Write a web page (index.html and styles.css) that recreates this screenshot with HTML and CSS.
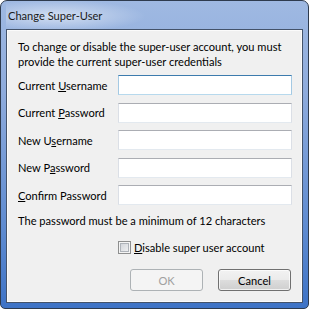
FILE: index.html
```html
<!DOCTYPE html>
<html lang="en">
  <head>
    <meta charset="UTF-8" />
    <title>Change Super-User</title>
    <link rel="stylesheet" href="styles.css">
  </head>
  <body>
    <div class="window">
      <div class="titlebar">Change Super-User</div>
      <div class="client">
        <p class="intro">To change or disable the super-user account, you must provide the current super-user credentials</p>
        <div class="fields">
          <label>Current <u>U</u>sername</label>
          <input type="text" class="focused" />
          <label>Current <u>P</u>assword</label>
          <input type="password" />
          <label>New U<u>s</u>ername</label>
          <input type="text" />
          <label>New P<u>a</u>ssword</label>
          <input type="password" />
          <label><u>C</u>onfirm Password</label>
          <input type="password" />
        </div>
        <p class="note">The password must be a minimum of 12 characters</p>
        <div class="check-row">
          <span class="checkbox"></span>
          <span><u>D</u>isable super user account</span>
        </div>
        <div class="buttons">
          <button disabled>OK</button>
          <button>Cancel</button>
        </div>
      </div>
    </div>
  </body>
</html>
```

FILE: styles.css
```css
body {
  margin: 0;
  background: #fff;
  font-family: Lato, "Liberation Sans", sans-serif;
  font-size: 11.1px;
  color: #000;
}
.window {
  width: 309px;
  height: 309px;
  box-sizing: border-box;
  border: 1px solid #2e3b4e;
  border-radius: 7px 7px 5px 5px;
  padding: 0 5px 5px;
  display: flex;
  flex-direction: column;
  background: linear-gradient(to bottom, #9fb9e2 0%, #8eabdc 30%, #5d8ad0 75%, #3e73c6 100%);
}
.titlebar {
  height: 28px;
  line-height: 29px;
  padding-left: 2px;
  color: #1a1a1a;
  background: radial-gradient(ellipse 90px 16px at 50px 15px, rgba(255,255,255,0.55), rgba(255,255,255,0));
}
.client {
  flex: 1;
  min-height: 0;
  background: #f0f0f0;
  border: 1px solid #44536a;
  box-shadow: inset 0 0 0 1px #fbfbfb;
  padding: 9px 10px 0 11px;
  display: flex;
  flex-direction: column;
}
.intro {
  margin: 0;
  line-height: 15px;
}
.fields {
  margin-top: 6px;
  display: grid;
  grid-template-columns: 100px minmax(0, 1fr);
  row-gap: 7.5px;
  align-items: center;
}
.fields label {
  white-space: nowrap;
}
.fields input {
  width: 100%;
  min-width: 0;
  height: 20px;
  box-sizing: border-box;
  margin: 0;
  background: #fff;
  border: 1px solid #dbdfe6;
  border-top-color: #abadb3;
  border-bottom-color: #e3e9ef;
  outline: none;
}
.fields input.focused {
  border-color: #a4c9e3;
  border-top-color: #3d7bad;
  border-bottom-color: #b7d9ed;
}
.note {
  margin: 8px 0 0;
  line-height: 15px;
  white-space: nowrap;
}
.check-row {
  margin-top: 12px;
  padding-left: 100px;
  display: flex;
  align-items: center;
  gap: 3px;
  height: 15px;
  white-space: nowrap;
}
.checkbox {
  width: 13px;
  height: 13px;
  box-sizing: border-box;
  border: 1px solid #8e8f8f;
  box-shadow: inset 0 0 0 1px #f4f4f4, inset 0 0 0 2px #aeb3b9;
  background: linear-gradient(135deg, #cbcfd5, #f6f6f6);
}
.buttons {
  margin-top: 14px;
  display: flex;
  justify-content: flex-end;
  gap: 15px;
  padding-right: 1px;
}
.buttons button {
  width: 73px;
  height: 22px;
  font: inherit;
  color: #000;
  border: 1px solid #707070;
  border-radius: 3px;
  background: linear-gradient(to bottom, #f2f2f2 0%, #ebebeb 50%, #dddddd 50%, #cfcfcf 100%);
  box-shadow: inset 0 0 0 1px rgba(255,255,255,0.7);
  padding: 0;
}
.buttons button:disabled {
  color: #a0a0a0;
  border-color: #adb2b5;
  background: #f4f4f4;
  box-shadow: none;
}
```
